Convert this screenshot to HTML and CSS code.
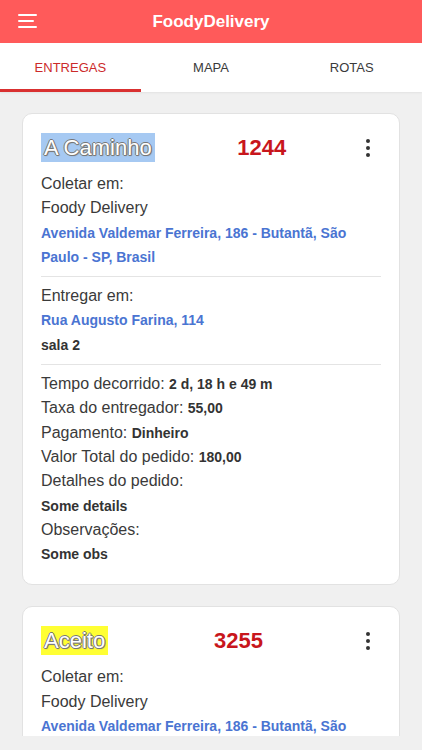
FILE: index.html
```html
<!DOCTYPE html>
<html lang="pt-BR">
<head>
    <meta charset="UTF-8">
    <meta name="viewport" content="width=device-width, initial-scale=1.0">
    <title>FoodyDelivery</title>
    <link rel="stylesheet" href="styles.css">
</head>
<body>
    <div class="app">
        <div class="header">
            <button class="menuBtn" aria-label="menu">
                <svg width="20" height="16" viewBox="0 0 20 16">
                    <rect x="0" y="1" width="19" height="2" rx="1" fill="#fff"/>
                    <rect x="0" y="7" width="16" height="2" rx="1" fill="#fff"/>
                    <rect x="0" y="13" width="19" height="2" rx="1" fill="#fff"/>
                </svg>
            </button>
            <h1>FoodyDelivery</h1>
        </div>
        <div class="tabs">
            <div class="tab active">ENTREGAS</div>
            <div class="tab">MAPA</div>
            <div class="tab">ROTAS</div>
        </div>
        <div class="content">
            <!-- entrega 1 -->
            <div class="card">
                <div class="cardTop">
                    <span class="status caminho">A Caminho</span>
                    <span class="orderNum">1244</span>
                    <span class="kebab"><i></i><i></i><i></i></span>
                </div>
                <div class="section">
                    <p>Coletar em:</p>
                    <p>Foody Delivery</p>
                    <p class="addr">Avenida Valdemar Ferreira, 186 - Butantã, São Paulo - SP, Brasil</p>
                </div>
                <div class="section">
                    <p>Entregar em:</p>
                    <p class="addr">Rua Augusto Farina, 114</p>
                    <p class="strong">sala 2</p>
                </div>
                <div class="section">
                    <p>Tempo decorrido: <b>2 d, 18 h e 49 m</b></p>
                    <p>Taxa do entregador: <b>55,00</b></p>
                    <p>Pagamento: <b>Dinheiro</b></p>
                    <p>Valor Total do pedido: <b>180,00</b></p>
                    <p>Detalhes do pedido:</p>
                    <p class="strong">Some details</p>
                    <p>Observações:</p>
                    <p class="strong">Some obs</p>
                </div>
            </div>
            <!-- entrega 2 -->
            <div class="card">
                <div class="cardTop">
                    <span class="status aceito">Aceito</span>
                    <span class="orderNum">3255</span>
                    <span class="kebab"><i></i><i></i><i></i></span>
                </div>
                <div class="section">
                    <p>Coletar em:</p>
                    <p>Foody Delivery</p>
                    <p class="addr">Avenida Valdemar Ferreira, 186 - Butantã, São</p>
                </div>
            </div>
        </div>
        <div class="bottomSafe"></div>
    </div>
</body>
</html>
```
FILE: styles.css
```css
*{
    box-sizing: border-box;
}
body{
    margin: 0;
    font-family: "Liberation Sans", Arial, sans-serif;
    background-color: #f0f0f0;
    color: #333;
}
.app{
    height: 100vh;
    display: flex;
    flex-direction: column;
    overflow: hidden;
}
.header{
    height: 43px;
    flex-shrink: 0;
    background-color: #ff5a5a;
    display: flex;
    align-items: center;
    justify-content: center;
    position: relative;
}
.header h1{
    margin: 0;
    color: #fff;
    font-size: 17px;
    font-weight: bold;
}
.menuBtn{
    position: absolute;
    left: 18px;
    top: 13px;
    padding: 0;
    border: none;
    background: none;
    display: flex;
}
.tabs{
    height: 49px;
    flex-shrink: 0;
    display: flex;
    background-color: #fff;
    box-shadow: 0 1px 2px rgba(0,0,0,0.06);
}
.tab{
    flex: 1;
    display: flex;
    align-items: center;
    justify-content: center;
    font-size: 13px;
    color: #3a3a3a;
    border-bottom: 3px solid transparent;
    padding-top: 3px;
}
.tab.active{
    color: #cc2a2a;
    border-bottom-color: #d93030;
}
.content{
    flex: 1;
    overflow: hidden;
    padding: 21px 22px 0 22px;
    display: flex;
    flex-direction: column;
    gap: 21px;
}
.bottomSafe{
    height: 14px;
    flex-shrink: 0;
}
.card{
    flex-shrink: 0;
    background-color: #fff;
    border: 1px solid #e2e2e2;
    border-radius: 10px;
    padding: 19px 18px 18px 18px;
}
.cardTop{
    display: flex;
    align-items: center;
    margin-bottom: 10px;
}
.status{
    font-size: 22px;
    line-height: 29px;
    padding: 0 3px;
    color: #fff;
    text-shadow: 1px 0 0 #777, -1px 0 0 #777, 0 1px 0 #777, 0 -1px 0 #777, 1px 1px 1px #777;
}
.status.caminho{
    background-color: #a6c9f2;
}
.status.aceito{
    background-color: #ffff33;
}
.orderNum{
    flex: 1;
    text-align: center;
    padding-left: 14px;
    font-size: 22px;
    font-weight: bold;
    color: #c8161c;
}
.kebab{
    width: 26px;
    display: flex;
    flex-direction: column;
    align-items: center;
    gap: 3px;
}
.kebab i{
    width: 4px;
    height: 4px;
    border-radius: 50%;
    background-color: #333;
}
.section p{
    margin: 0;
    font-size: 16px;
    line-height: 24.3px;
    color: #3a3a3a;
}
.section + .section{
    border-top: 1px solid #e4e4e4;
    margin-top: 7px;
    padding-top: 7px;
}
.section b, .section .strong{
    font-size: 14px;
    font-weight: bold;
    color: #333;
}
.section .addr{
    font-size: 14px;
    font-weight: bold;
    color: #4a74d2;
}
```
